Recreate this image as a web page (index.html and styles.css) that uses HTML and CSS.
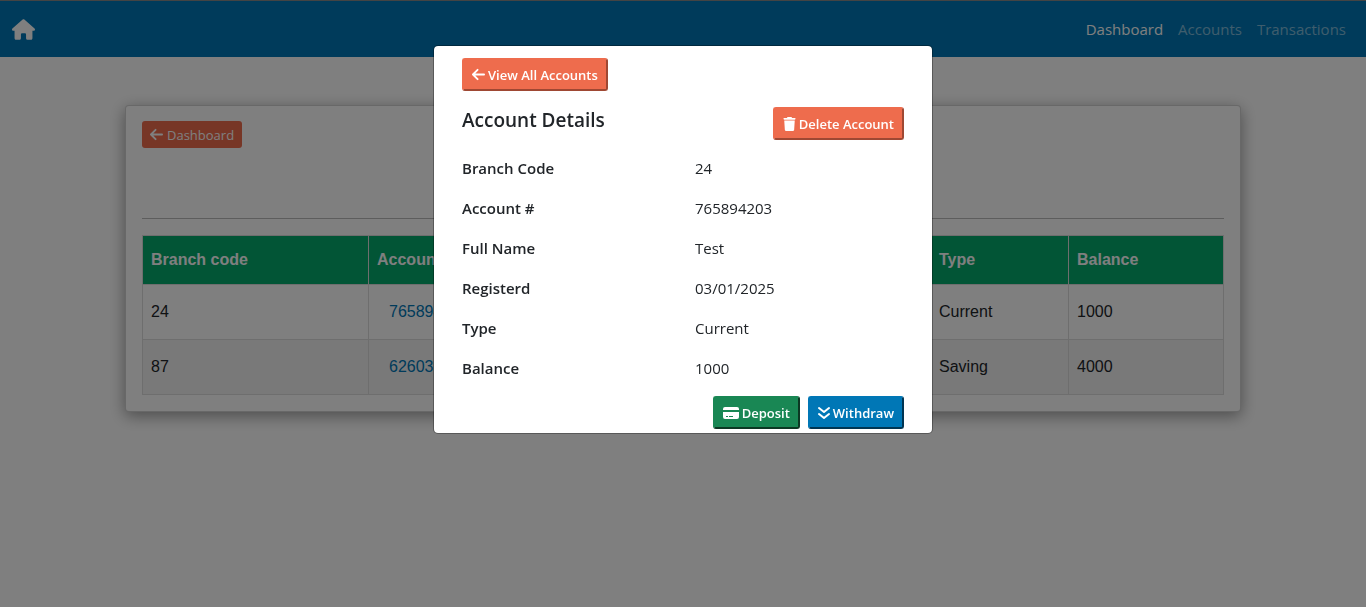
FILE: index.html
```html
<!DOCTYPE html>
<html lang="en">
<head>
<meta charset="utf-8">
<meta name="viewport" content="width=device-width, initial-scale=1">
<title>Account Details</title>
<link rel="stylesheet" href="styles.css">
</head>
<body>
<nav class="navbar">
  <a class="brand" href="#" aria-label="Home">
    <svg class="icon-home" viewBox="0 0 576 512" aria-hidden="true"><path d="M575.8 255.500c0 18-15 32.100-32 32.100h-32V472c0 22-18 40-40 40H392c-22 0-40-18-40-40v-88.500c0-17.700-14.300-32-32-32h-64c-17.700 0-32 14.300-32 32V472c0 22-18 40-40 40h-80c-22 0-40-18-40-40V287.600H32c-18 0-32-14-32-32.100 0-9 3-17 10-24L266.400 8c7-7 15-8 22-8s15 2 21 7l255.400 224.500c8 7 12 15 11 24z"/></svg>
  </a>
  <div class="nav-links">
    <a class="nav-link active" href="#">Dashboard</a>
    <a class="nav-link" href="#">Accounts</a>
    <a class="nav-link" href="#">Transactions</a>
  </div>
</nav>

<main class="page">
  <section class="card">
    <div class="card-head">
      <button class="btn-back" type="button">
        <svg class="icon" viewBox="0 0 14 14" aria-hidden="true"><path class="stroke" d="M13 7H1M6 2 1 7l5 5"/></svg>
        Dashboard
      </button>
    </div>
    <table class="accounts">
      <thead>
        <tr><th class="col-branch">Branch code</th><th>Account #</th><th class="col-type">Type</th><th class="col-balance">Balance</th></tr>
      </thead>
      <tbody>
        <tr><td>24</td><td><a class="account-link" href="#">765894203</a></td><td>Current</td><td>1000</td></tr>
        <tr><td>87</td><td><a class="account-link" href="#">62603</a></td><td>Saving</td><td>4000</td></tr>
      </tbody>
    </table>
  </section>
</main>

<div class="backdrop">
  <div class="modal" role="dialog" aria-modal="true" aria-labelledby="modal-title">
    <div>
      <button class="btn btn-orange" type="button">
        <svg class="icon" viewBox="0 0 14 14" aria-hidden="true"><path class="stroke" d="M13 7H1M6 2 1 7l5 5"/></svg>
        View All Accounts
      </button>
    </div>
    <div class="modal-head">
      <h5 class="title" id="modal-title">Account Details</h5>
      <button class="btn btn-orange" type="button">
        <svg class="icon icon-trash" viewBox="0 0 448 512" aria-hidden="true"><path d="M135.200 17.700C140.600 6.800 151.700 0 163.800 0h120.400c12.100 0 23.200 6.800 28.600 17.700L320 32h96c17.700 0 32 14.300 32 32s-14.300 32-32 32H32C14.300 96 0 81.700 0 64s14.300-32 32-32h96zM32 128h384l-21.200 339c-1.600 25.300-22.600 45-47.900 45H101.100c-25.300 0-46.300-19.700-47.900-45z"/></svg>
        Delete Account
      </button>
    </div>
    <dl class="details">
      <dt>Branch Code</dt><dd>24</dd>
      <dt>Account #</dt><dd>765894203</dd>
      <dt>Full Name</dt><dd>Test</dd>
      <dt>Registerd</dt><dd>03/01/2025</dd>
      <dt>Type</dt><dd>Current</dd>
      <dt>Balance</dt><dd>1000</dd>
    </dl>
    <div class="actions">
      <button class="btn btn-green" type="button">
        <svg class="icon icon-card" viewBox="0 0 16 14" aria-hidden="true"><path fill-rule="evenodd" d="M2 1h12a2 2 0 0 1 2 2v1H0V3a2 2 0 0 1 2-2zM0 6h16v5a2 2 0 0 1-2 2H2a2 2 0 0 1-2-2zm3 4v1h2v-1zm3 0v1h4v-1z"/></svg>
        Deposit
      </button>
      <button class="btn btn-blue" type="button">
        <svg class="icon icon-down" viewBox="0 0 12 14" aria-hidden="true"><path class="stroke" d="m1 2 5 4 5-4M1 8l5 4 5-4"/></svg>
        Withdraw
      </button>
    </div>
  </div>
</div>
</body>
</html>
```
FILE: styles.css
```css
* { box-sizing: border-box; }

body {
  margin: 0;
  background: #fff;
  color: #212529;
  font: 15px/24px "Open Sans", "Noto Sans", sans-serif;
}

svg { fill: currentColor; }
.stroke {
  fill: none;
  stroke: currentColor;
  stroke-width: 2;
  stroke-linecap: round;
  stroke-linejoin: round;
}

.navbar {
  display: flex;
  align-items: center;
  justify-content: space-between;
  height: 57px;
  padding: 0 20px 0 12px;
  border-top: 1px solid #888;
  background: #0077b6;
}
.brand { display: flex; color: #fff; }
.icon-home { width: 23px; height: 21px; }
.nav-links { display: flex; gap: 15px; }
.nav-link { color: rgba(255, 255, 255, .5); text-decoration: none; }
.nav-link.active { color: #fff; }

.page { padding: 48px 12px; }
.card {
  max-width: 1116px;
  margin: 0 auto;
  padding: 15px 16px 16px;
  border: 1px solid rgba(0, 0, 0, .18);
  border-radius: 4px;
  box-shadow: 0 4px 16px rgba(0, 0, 0, .4);
  background: #fff;
}
.card-head {
  height: 98px;
  margin-bottom: 16px;
  border-bottom: 1px solid #bbb;
}
.btn-back {
  display: inline-flex;
  align-items: center;
  gap: 4px;
  height: 27px;
  padding: 0 8px;
  border: 0;
  border-radius: 3px;
  background: #ee6c4d;
  color: #fff;
  font: 13px "Open Sans", "Noto Sans", sans-serif;
}
.icon { width: 13px; height: 13px; flex: none; }

.accounts {
  width: 100%;
  table-layout: fixed;
  border-collapse: collapse;
  font: 16px/24px "Liberation Sans", Arial, sans-serif;
}
.accounts th, .accounts td {
  height: 55px;
  padding: 0 8px;
  border: 1px solid #ddd;
  text-align: left;
}
.accounts th { height: 49px; background: #04aa6d; color: #fff; }
.accounts tbody tr:nth-child(even) { background: #f2f2f2; }
.accounts .col-branch { width: 226px; }
.accounts .col-type { width: 138px; }
.accounts .col-balance { width: 155px; }
.account-link { padding-left: 12px; color: #0077b6; text-decoration: none; }

.backdrop {
  position: fixed;
  inset: 0;
  display: flex;
  align-items: flex-start;
  justify-content: center;
  padding-top: 45px;
  background: rgba(0, 0, 0, .5);
}
.modal {
  width: 100%;
  max-width: 500px;
  padding: 12px 28px 4px;
  border: 1px solid rgba(0, 0, 0, .3);
  border-radius: 5px;
  background: #fff;
  background-clip: padding-box;
}
.modal-head {
  display: flex;
  justify-content: space-between;
  margin: 16px 0;
}
.title { margin: 0; font-size: 19px; font-weight: 600; line-height: 26px; }
.details {
  display: grid;
  grid-template-columns: 1fr 1fr;
  gap: 16px 24px;
  margin: 0 0 16px;
}
.details dt { font-weight: 600; }
.details dd { margin: 0; }
.actions { display: flex; justify-content: flex-end; gap: 8px; }

.btn {
  display: inline-flex;
  align-items: center;
  gap: 3px;
  height: 33px;
  padding: 0 8px;
  border: 2px solid;
  border-radius: 3px;
  color: #fff;
  font: 600 13px "Open Sans", "Noto Sans", sans-serif;
  vertical-align: top;
}
.btn-orange { background: #ee6c4d; border-color: #ee6c4d #9f4833 #9f4833 #ee6c4d; }
.btn-green { background: #198754; border-color: #198754 #0b3823 #0b3823 #198754; }
.btn-blue { background: #0077b6; border-color: #0077b6 #003552 #003552 #0077b6; }
.icon-card { width: 16px; height: 14px; }
.icon-trash { height: 14px; }
.icon-down { width: 12px; height: 14px; }
```
